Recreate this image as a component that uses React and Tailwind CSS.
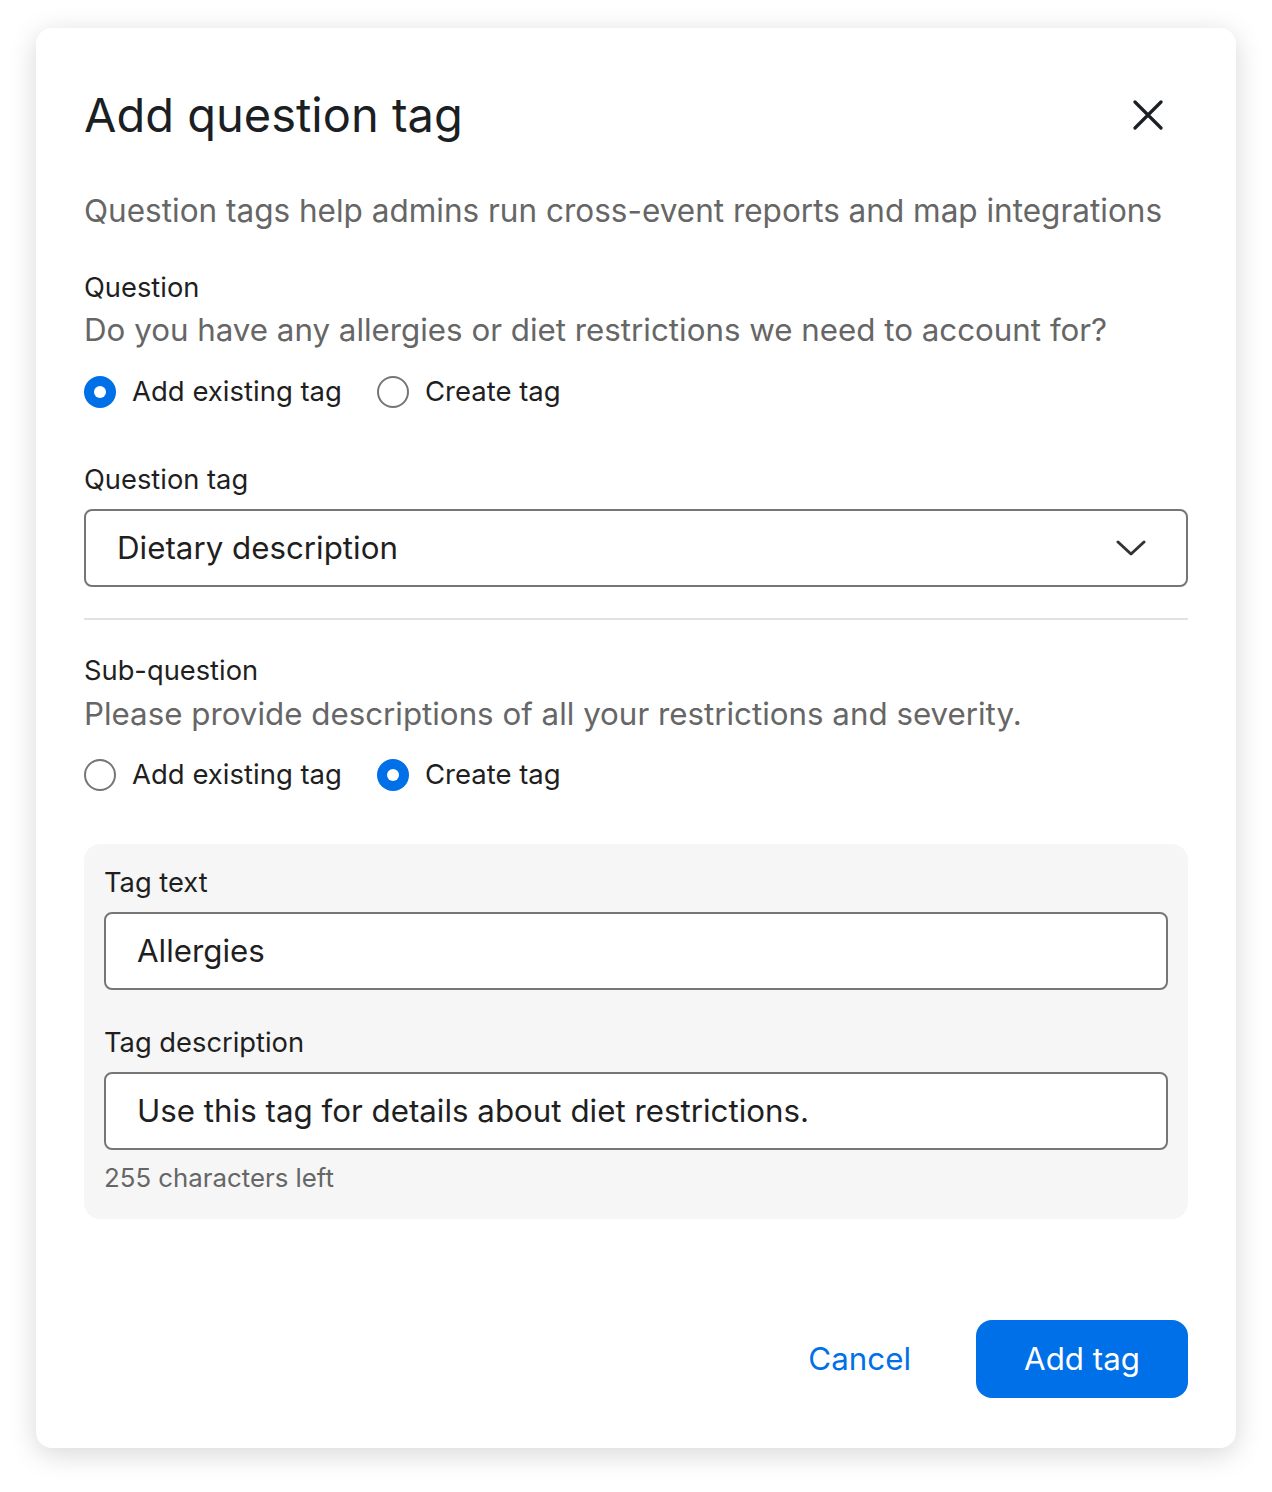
import { useState } from 'react';

function Radio({ checked, label, onClick }) {
  return (
    <button type="button" onClick={onClick} className="flex items-center gap-4 h-[44px]">
      {checked ? (
        <span className="w-8 h-8 rounded-full bg-[#0070e8] flex items-center justify-center">
          <span className="w-3 h-3 rounded-full bg-white" />
        </span>
      ) : (
        <span className="w-8 h-8 rounded-full border-2 border-[#767676] bg-white" />
      )}
      <span className="text-[27.5px] text-[#1f1f1f]">{label}</span>
    </button>
  );
}

export default function App() {
  const [q1, setQ1] = useState('existing');
  const [q2, setQ2] = useState('create');

  return (
    <div className="min-h-[1492px] bg-white pt-[28px] px-[36px]" style={{ fontFamily: 'Inter, "Noto Sans", sans-serif' }}>
      <div className="w-[1200px] h-[1420px] bg-white rounded-2xl shadow-[0_6px_28px_rgba(0,0,0,0.16)] px-12 pt-12 flex flex-col">
        {/* Header */}
        <div className="h-[78px] flex items-center justify-between">
          <h1 className="text-[47px] leading-[56px] text-[#1b1f24] font-normal">Add question tag</h1>
          <button type="button" className="w-[60px] h-[60px] flex items-center justify-center mr-[10px] text-[#1b1f24]">
            <svg width="30" height="30" viewBox="0 0 30 30" fill="none" stroke="currentColor" strokeWidth="3.2" strokeLinecap="round">
              <path d="M2 2L28 28M28 2L2 28" />
            </svg>
          </button>
        </div>

        <p className="mt-[35px] text-[31.5px] leading-[44px] text-[#666]">
          Question tags help admins run cross-event reports and map integrations
        </p>

        {/* Question */}
        <div className="mt-[37px] text-[27.3px] leading-[36px] text-[#1f1f1f]">Question</div>
        <p className="mt-[2px] text-[31.3px] leading-[44px] text-[#666]">
          Do you have any allergies or diet restrictions we need to account for?
        </p>
        <div className="mt-[18px] flex items-center gap-[35px]">
          <Radio checked={q1 === 'existing'} label="Add existing tag" onClick={() => setQ1('existing')} />
          <Radio checked={q1 === 'create'} label="Create tag" onClick={() => setQ1('create')} />
        </div>

        <div className="mt-[48px] text-[27.3px] leading-[36px] text-[#1f1f1f]">Question tag</div>
        <div className="mt-[11px] h-[78px] border-2 border-[#767676] rounded-lg flex items-center justify-between pl-[31px] pr-10">
          <span className="text-[31.3px] text-[#1f1f1f]">Dietary description</span>
          <svg width="30" height="18" viewBox="0 0 30 18" fill="none" stroke="#333" strokeWidth="3" strokeLinecap="round" strokeLinejoin="round">
            <path d="M2 3L15 15L28 3" />
          </svg>
        </div>

        <div className="mt-[31px] h-[2px] bg-[#e2e2e2]" />

        {/* Sub-question */}
        <div className="mt-[33px] text-[27.3px] leading-[36px] text-[#1f1f1f]">Sub-question</div>
        <p className="mt-[3px] text-[31.3px] leading-[44px] text-[#666]">
          Please provide descriptions of all your restrictions and severity.
        </p>
        <div className="mt-[17px] flex items-center gap-[35px]">
          <Radio checked={q2 === 'existing'} label="Add existing tag" onClick={() => setQ2('existing')} />
          <Radio checked={q2 === 'create'} label="Create tag" onClick={() => setQ2('create')} />
        </div>

        <div className="mt-[47px] bg-[#f6f6f6] rounded-2xl px-5 pt-[21px] pb-6">
          <div className="text-[27.3px] leading-[36px] text-[#1f1f1f]">Tag text</div>
          <div className="mt-[11px] h-[78px] bg-white border-2 border-[#767676] rounded-lg flex items-center pl-[31px]">
            <span className="text-[31.3px] text-[#1f1f1f]">Allergies</span>
          </div>
          <div className="mt-[35px] text-[27.3px] leading-[36px] text-[#1f1f1f]">Tag description</div>
          <div className="mt-[11px] h-[78px] bg-white border-2 border-[#767676] rounded-lg flex items-center pl-[31px]">
            <span className="text-[31.3px] text-[#1f1f1f]">Use this tag for details about diet restrictions.</span>
          </div>
          <div className="mt-[11px] text-[25.8px] leading-[34px] text-[#666]">255 characters left</div>
        </div>

        {/* Footer */}
        <div className="mt-[101px] flex items-center justify-end gap-[65px]">
          <button type="button" className="text-[31.3px] text-[#0070e8]">Cancel</button>
          <button type="button" className="w-[212px] h-[78px] rounded-2xl bg-[#0070e8] text-white text-[31.3px]">
            Add tag
          </button>
        </div>
      </div>
    </div>
  );
}
